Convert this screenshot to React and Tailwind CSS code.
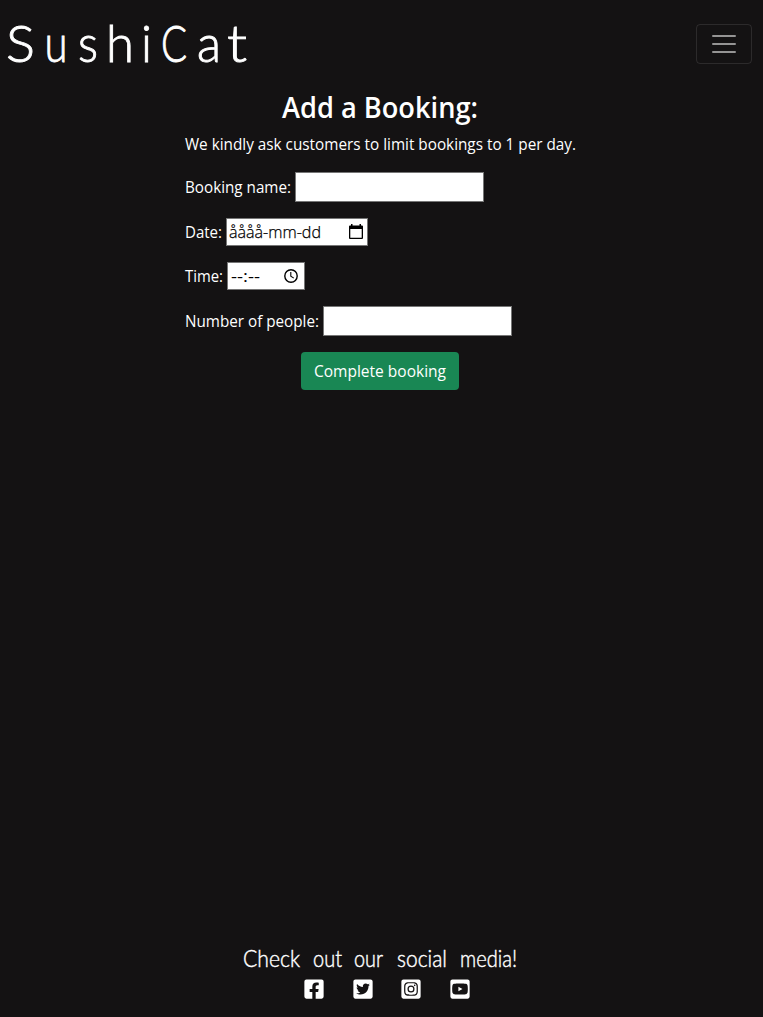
import { FaFacebookSquare, FaTwitterSquare, FaInstagramSquare, FaYoutubeSquare } from "react-icons/fa";

function Navbar() {
  return (
    <header className="flex h-[88px] items-center justify-between pr-[11px]">
      <a href="#" className="block">
        <svg width="260" height="88" className="block overflow-visible" aria-label="SushiCat">
          <text
            y="61.5"
            fill="white"
            stroke="white"
            strokeWidth="0.9"
            className="font-['Lato'] text-[52px] font-light"
          >
            <tspan x="6" textLength="29" lengthAdjust="spacingAndGlyphs">S</tspan>
            <tspan x="44.500" textLength="23" lengthAdjust="spacingAndGlyphs">u</tspan>
            <tspan x="78" textLength="20" lengthAdjust="spacingAndGlyphs">s</tspan>
            <tspan x="106" textLength="28" lengthAdjust="spacingAndGlyphs">h</tspan>
            <tspan x="141" textLength="11" lengthAdjust="spacingAndGlyphs">i</tspan>
            <tspan x="161" textLength="26" lengthAdjust="spacingAndGlyphs">C</tspan>
            <tspan x="197" textLength="24" lengthAdjust="spacingAndGlyphs">a</tspan>
            <tspan x="227" textLength="20" lengthAdjust="spacingAndGlyphs">t</tspan>
          </text>
        </svg>
      </a>
      <button
        aria-label="Toggle navigation"
        className="flex h-10 w-14 items-center justify-center rounded-[4px] border border-white/10"
      >
        <svg width="30" height="30" viewBox="0 0 30 30" className="block">
          <path stroke="rgba(255,255,255,.55)" strokeLinecap="round" strokeMiterlimit="10" strokeWidth="2" d="M4 7h22M4 15h22M4 23h22" />
        </svg>
      </button>
    </header>
  );
}

function CalendarIcon() {
  return (
    <svg width="14" height="16" viewBox="0 0 14 16" className="block">
      <path d="M2 0h1.500v1.500h7V0H12v1.500h1a1 1 0 0 1 1 1V14a1 1 0 0 1-1 1H1a1 1 0 0 1-1-1V2.500a1 1 0 0 1 1-1h1zM1.300 5v8.700h11.400V5z" fill="black" fillRule="evenodd" />
    </svg>
  );
}

function ClockIcon() {
  return (
    <svg width="14" height="14" viewBox="0 0 14 14" className="block" fill="none" stroke="black">
      <circle cx="7" cy="7" r="6.2" strokeWidth="1.4" />
      <path d="M6.800 3v4.200l3 1.900" strokeWidth="1.1" />
    </svg>
  );
}

function SvgText({ width, height, y, length, className, children }) {
  return (
    <svg width={width} height={height} className="block shrink-0 overflow-visible">
      <text x="0" y={y} textLength={length} lengthAdjust="spacingAndGlyphs" fill="currentColor" className={className}>
        {children}
      </text>
    </svg>
  );
}

function Label({ width, y = 18, children }) {
  return (
    <SvgText width={width} height={24} y={y} length={width} className="text-[16px]">
      {children}
    </SvgText>
  );
}

function BookingForm() {
  return (
    <main className="ml-[185px] w-[390px]">
      <h1 className="flex h-[40px] justify-center">
        <SvgText width={196} height={40} y={30} length={196} className="text-[28px] font-semibold">
          Add a Booking:
        </SvgText>
      </h1>
      <p className="mt-[5px] h-6">
        <Label width={391} y={17}>We kindly ask customers to limit bookings to 1 per day.</Label>
      </p>
      <form className="mt-[15px] flex flex-col gap-4">
        <label className="flex h-[30px] items-center gap-1">
          <Label width={106}>Booking name:</Label>
          <input className="h-[30px] w-[189px] border border-[#767676] bg-white px-1 text-black outline-none" />
        </label>
        <div className="flex h-7 items-center gap-1">
          <Label width={37}>Date:</Label>
          <span className="flex h-7 w-[142px] items-center justify-between border border-[#767676] bg-white pr-[4px] pl-[2px] text-black">
            <SvgText width={93} height={24} y={18} length={92} className="stroke-black stroke-[0.25px] text-[16px] font-light">
              åååå-mm-dd
            </SvgText>
            <CalendarIcon />
          </span>
        </div>
        <div className="flex h-7 items-center gap-1">
          <Label width={38}>Time:</Label>
          <span className="flex h-7 w-[78px] items-center justify-between border border-[#767676] bg-white pr-[6px] pl-[3px] text-black">
            <SvgText width={29} height={24} y={18} length={29} className="text-[16px]">
              --:--
            </SvgText>
            <ClockIcon />
          </span>
        </div>
        <label className="flex h-[30px] items-center gap-1">
          <Label width={134}>Number of people:</Label>
          <input className="h-[30px] w-[189px] border border-[#767676] bg-white px-1 text-black outline-none" />
        </label>
        <button type="button" className="flex h-[38px] w-[158px] items-center justify-center self-center rounded-[4px] bg-[#198754]">
          <Label width={132}>Complete booking</Label>
        </button>
      </form>
    </main>
  );
}

function Footer() {
  return (
    <footer className="mt-auto flex h-[75px] flex-col items-center">
      <svg width="277" height="34" className="block overflow-visible" aria-label="Check out our social media!">
        <g className="font-['Lato'] text-[24px] font-light" fill="white" stroke="white" strokeWidth="0.45">
          <text x="0" y="24.500" textLength="57" lengthAdjust="spacingAndGlyphs">Check</text>
          <text x="70" y="24.500" textLength="29" lengthAdjust="spacingAndGlyphs">out</text>
          <text x="111" y="24.500" textLength="29" lengthAdjust="spacingAndGlyphs">our</text>
          <text x="154" y="24.500" textLength="50" lengthAdjust="spacingAndGlyphs">social</text>
          <text x="217" y="24.500" textLength="57" lengthAdjust="spacingAndGlyphs">media!</text>
        </g>
      </svg>
      <nav className="ml-[11px] flex gap-[26.500px] pt-[2px] text-[22px] text-white">
        <FaFacebookSquare />
        <FaTwitterSquare />
        <FaInstagramSquare />
        <FaYoutubeSquare />
      </nav>
    </footer>
  );
}

export default function App() {
  return (
    <div className="flex min-h-screen flex-col bg-[#141213] font-['Open_Sans','Noto_Sans',sans-serif] text-white">
      <Navbar />
      <BookingForm />
      <Footer />
    </div>
  );
}
